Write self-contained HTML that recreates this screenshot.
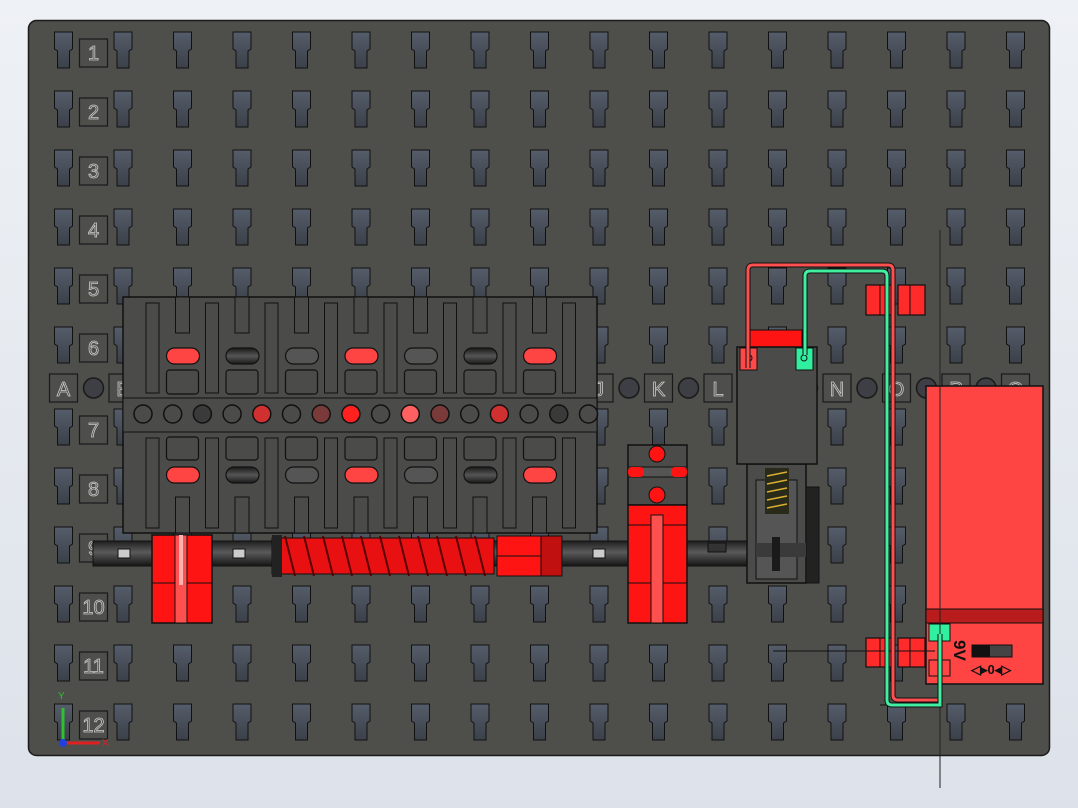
<!DOCTYPE html>
<html><head><meta charset="utf-8"><style>
html,body{margin:0;padding:0;background:#e6eaf0;}
svg{display:block;font-family:"Liberation Sans",sans-serif;}
</style></head><body>
<svg id="s" width="1078" height="808" viewBox="0 0 1078 808" xmlns="http://www.w3.org/2000/svg">
<defs>
<linearGradient id="bg" x1="0" y1="0" x2="0" y2="1"><stop offset="0" stop-color="#eef1f5"/><stop offset="1" stop-color="#dde2ea"/></linearGradient>
<linearGradient id="slotg" x1="0" y1="0" x2="0" y2="1"><stop offset="0" stop-color="#555d6a"/><stop offset="1" stop-color="#3b4049"/></linearGradient>
<linearGradient id="axle" x1="0" y1="0" x2="0" y2="1"><stop offset="0" stop-color="#1e1e1e"/><stop offset=".45" stop-color="#5a5a5a"/><stop offset="1" stop-color="#151515"/></linearGradient>
<linearGradient id="dkov" x1="0" y1="0" x2="0" y2="1"><stop offset="0" stop-color="#1a1a1a"/><stop offset=".5" stop-color="#555"/><stop offset="1" stop-color="#1a1a1a"/></linearGradient>
<symbol id="slot" overflow="visible"><path d="M-9 0h18v17l-3 2v17h-12v-17l-3-2z" fill="url(#slotg)" stroke="#111" stroke-width="1"/></symbol>
</defs>
<rect width="1078" height="808" fill="url(#bg)"/>
<rect x="28.5" y="20.5" width="1021" height="735" rx="8" fill="#4e4e4b" stroke="#1a1a1a" stroke-width="1.5"/>
<g id="slots"></g>
<g id="labels" font-size="20" fill="#4e4e4b" stroke="#c8c8c8" stroke-width=".8"></g>

<g id="panel">
<rect x="123" y="297" width="474" height="236" fill="#4b4b49" stroke="#111" stroke-width="1.5"/>
</g>

<rect x="93" y="541" width="657" height="25" fill="url(#axle)" stroke="#111"/>
<rect x="118" y="549" width="12" height="9" fill="#ccc" stroke="#111"/>
<rect x="233" y="549" width="12" height="9" fill="#ccc" stroke="#111"/>
<rect x="593" y="549" width="12" height="9" fill="#ccc" stroke="#111"/>
<rect x="708" y="543" width="18" height="9" fill="#333" stroke="#111"/>
<rect x="152" y="535" width="60" height="88" fill="#ff1414" stroke="#111" stroke-width="1.5"/>
<line x1="152" y1="583" x2="212" y2="583" stroke="#111"/>
<rect x="175" y="535" width="12" height="88" fill="#ff5050" stroke="#111"/>
<rect x="179" y="535" width="4" height="50" fill="#ffb0b0"/>
<rect x="272" y="538" width="222" height="36" fill="#e81010" stroke="#111"/>
<g id="worm" stroke="#5a0000" stroke-width="2" fill="none"></g>
<rect x="272" y="535" width="10" height="42" fill="#222"/>
<rect x="497" y="536" width="48" height="40" fill="#ff1414" stroke="#111"/>
<line x1="497" y1="556" x2="545" y2="556" stroke="#111"/>
<rect x="541" y="536" width="21" height="40" fill="#c01010" stroke="#111"/>
<rect x="628" y="445" width="59" height="60" fill="#4b4b49" stroke="#111" stroke-width="1.5"/>
<circle cx="657" cy="454" r="8" fill="#ff1414" stroke="#111"/>
<rect x="628" y="467" width="59" height="10" fill="#555" stroke="#111"/>
<rect x="628" y="467" width="16" height="10" rx="4" fill="#ff1414"/><rect x="671" y="467" width="16" height="10" rx="4" fill="#ff1414"/>
<circle cx="657" cy="495" r="8" fill="#ff1414" stroke="#111"/>
<rect x="628" y="505" width="59" height="118" fill="#ff1414" stroke="#111" stroke-width="1.5"/>
<line x1="628" y1="525" x2="687" y2="525" stroke="#111"/><line x1="628" y1="583" x2="687" y2="583" stroke="#111"/>
<rect x="651" y="515" width="12" height="108" fill="#ff5050" stroke="#111"/>
<rect x="747" y="464" width="59" height="119" fill="#4b4b49" stroke="#111" stroke-width="1.5"/>
<rect x="756" y="480" width="41" height="99" fill="#555" stroke="#111"/>
<rect x="765" y="468" width="24" height="46" fill="#2a2a1a"/>
<g stroke="#d8b030" stroke-width="1.5"><line x1="767" y1="476" x2="787" y2="472"/><line x1="767" y1="484" x2="787" y2="480"/><line x1="767" y1="492" x2="787" y2="488"/><line x1="767" y1="500" x2="787" y2="496"/><line x1="767" y1="508" x2="787" y2="504"/></g>
<rect x="806" y="487" width="13" height="96" fill="#222" stroke="#111"/>
<rect x="756" y="543" width="50" height="14" fill="#3a3a3a"/>
<rect x="772" y="537" width="8" height="34" fill="#1a1a1a"/>
<rect x="750" y="330" width="52" height="17" fill="#ff1414" stroke="#111"/>
<rect x="737" y="347" width="80" height="117" fill="#4b4b49" stroke="#111" stroke-width="1.5"/>
<rect x="740" y="348" width="17" height="22" fill="#ff4848" stroke="#111"/>
<rect x="796" y="348" width="17" height="22" fill="#30f0a0" stroke="#111"/>
<circle cx="749" cy="358" r="3" fill="none" stroke="#111"/><circle cx="804" cy="358" r="3" fill="none" stroke="#111"/>
<g fill="#ff2a2a" stroke="#111" stroke-width="1.2">
<rect x="866" y="285" width="27" height="30"/><rect x="898" y="285" width="27" height="30"/>
<rect x="866" y="638" width="27" height="29"/><rect x="898" y="638" width="27" height="29"/>
</g>
<g stroke="#111"><line x1="880" y1="285" x2="880" y2="315"/><line x1="910" y1="285" x2="910" y2="315"/><line x1="880" y1="638" x2="880" y2="667"/><line x1="910" y1="638" x2="910" y2="667"/></g>
<rect x="926" y="386" width="117" height="298" fill="#ff4444" stroke="#111" stroke-width="1.5"/>
<rect x="926" y="609" width="117" height="14" fill="#b81c1c" stroke="#111"/>
<rect x="929" y="624" width="21" height="17" fill="#30f0a0" stroke="#111"/>
<rect x="929" y="660" width="21" height="16" fill="none" stroke="#111"/>
<rect x="972" y="645" width="40" height="12" fill="#444" stroke="#111"/><rect x="972" y="645" width="18" height="12" fill="#111"/>
<text x="954" y="640" font-size="17" font-weight="bold" fill="#111" transform="rotate(90 954 640)">9V</text>
<text x="971" y="674" font-size="13" font-weight="bold" fill="#111">◁▸0◂▷</text>
<line x1="940" y1="230" x2="940" y2="788" stroke="#222" stroke-width="1"/>
<line x1="773" y1="651" x2="935" y2="651" stroke="#111"/>
<line x1="880" y1="705" x2="905" y2="705" stroke="#111"/>
<path d="M748 368V270q0-5 5-5H888q5 0 5 5V695q0 5 5 5H940" fill="none" stroke="#111" stroke-width="5"/>
<path d="M748 368V270q0-5 5-5H888q5 0 5 5V695q0 5 5 5H940" fill="none" stroke="#ff5050" stroke-width="3"/>
<path d="M805 355V276q0-5 5-5H882q5 0 5 5V700q0 5 5 5H940V634" fill="none" stroke="#111" stroke-width="5"/>
<path d="M805 355V276q0-5 5-5H882q5 0 5 5V700q0 5 5 5H940V634" fill="none" stroke="#40f0a0" stroke-width="3"/>
<line x1="63" y1="743" x2="63" y2="708" stroke="#30c030" stroke-width="3"/>
<line x1="63" y1="743" x2="100" y2="743" stroke="#e02020" stroke-width="3"/>
<circle cx="63" cy="743" r="4" fill="#2040e0"/>
<text x="58" y="699" font-size="10" fill="#30c030">Y</text>
<text x="102" y="746" font-size="10" fill="#e02020">X</text>
</svg>
<script>
var NS="http://www.w3.org/2000/svg",s=document.getElementById('slots'),L=document.getElementById('labels');
function el(p,t,a,tx){var e=document.createElementNS(NS,t);for(var k in a)e.setAttribute(k,a[k]);if(tx)e.textContent=tx;p.appendChild(e);return e;}
var rows=[32,91,150,209,268,327,409,468,527,586,645,704];
for(var c=0;c<17;c++){var x=63.5+c*59.5;for(var r=0;r<12;r++){var u=el(s,'use',{x:x,y:rows[r]});u.setAttributeNS("http://www.w3.org/1999/xlink","href","#slot");u.setAttribute("href","#slot");}}
for(var r=0;r<12;r++){var y=rows[r]+7;el(L,'rect',{x:79.5,y:y,width:28,height:28,fill:'none',stroke:'#1a1a1a','stroke-width':1.2});el(L,'text',{x:93.5,y:y+21,'text-anchor':'middle'},String(r+1));}
var letters="ABCDEFGHIJKLMNOPQ";
for(var c=0;c<17;c++){var x=63.5+c*59.5;el(L,'rect',{x:x-14,y:374,width:28,height:28,fill:'none',stroke:'#1a1a1a','stroke-width':1.2});el(L,'text',{x:x,y:396,'text-anchor':'middle'},letters[c]);
if(c<16)el(L,'circle',{cx:x+30,cy:388,r:10,fill:'#3d3f45',stroke:'#1a1a1a','stroke-width':1.5});}
var P=document.getElementById('panel');
var fills=['#ff4444','url(#dkov)','#555','#ff4444','#555','url(#dkov)','#ff4444'];
for(var i=0;i<8;i++){var bx=152+i*59.5;el(P,'rect',{x:bx-6,y:303,width:13,height:90,fill:'#4b4b49',stroke:'#111'});el(P,'rect',{x:bx-6,y:438,width:13,height:90,fill:'#4b4b49',stroke:'#111'});}
for(var i=0;i<7;i++){var X=182.5+i*59.5;
el(P,'rect',{x:X-7,y:297,width:14,height:36,fill:'#4b4b49',stroke:'#111'});el(P,'rect',{x:X-7,y:497,width:14,height:36,fill:'#4b4b49',stroke:'#111'});
el(P,'rect',{x:X-16,y:370,width:32,height:24,rx:3,fill:'none',stroke:'#111','stroke-width':1.2});el(P,'rect',{x:X-16,y:437,width:32,height:23,rx:3,fill:'none',stroke:'#111','stroke-width':1.2});
el(P,'rect',{x:X-16,y:348,width:33,height:16,rx:8,fill:fills[i],stroke:'#111','stroke-width':1.2});el(P,'rect',{x:X-16,y:467,width:33,height:16,rx:8,fill:fills[i],stroke:'#111','stroke-width':1.2});}
el(P,'rect',{x:123,y:398,width:474,height:34,fill:'#4b4b49',stroke:'#111'});
var fc={2:'#3a3a3a',4:'#d03030',6:'#7a3a3a',7:'#ff2020',9:'#ff6060',10:'#7a3a3a',12:'#d03030',14:'#3a3a3a'};
for(var k=0;k<16;k++){var cx=143+k*29.7;el(P,'circle',{cx:cx,cy:414,r:9,fill:fc[k]||'#4b4b49',stroke:'#111','stroke-width':1.5});}
var W=document.getElementById('worm');
for(var k=0;k<11;k++){var x=285+k*19;el(W,'path',{d:'M'+x+' 536 L'+(x+10)+' 576'});}
</script>
</body></html>
